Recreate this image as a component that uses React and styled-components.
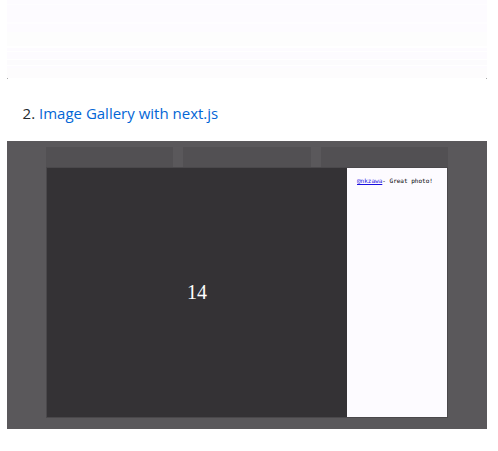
import React from "react";
import styled, { createGlobalStyle } from "styled-components";

const GlobalStyle = createGlobalStyle`
  * { box-sizing: border-box; }
  body {
    margin: 0;
    background: #ffffff;
    color: #24292e;
    font-family: "Open Sans", "Noto Sans", sans-serif;
    font-size: 15px;
    line-height: 24px;
  }
`;

const Page = styled.main`
  padding: 0 11px 22px 7px;
`;

const PreviousDemo = styled.div`
  display: flex;
  align-items: flex-end;
  justify-content: space-between;
  height: 79px;
  background: linear-gradient(
    #fdfbff 0 4px, #fefdff 4px 5px, #fdfbff 5px 22px, #fefdff 22px 24px,
    #fdfbff 24px 32px, #fdfdfd 32px 46px, #ffffff 46px 48px, #fdfbff 48px 51px,
    #ffffff 51px 52px, #fdfbff 52px 59px, #ffffff 59px 60px, #fcfbfd 60px 65px,
    #ffffff 65px 66px, #fdfbff 66px 68px, #fdfcfd 68px 78px, #ffffff 78px
  );
`;

const CornerMark = styled.span`
  width: 1px;
  height: 1px;
  background: #a9a9a9;
`;

const DemoList = styled.ol`
  margin: 0;
  padding: 22px 0 16px 32px;
`;

const DemoLink = styled.a`
  color: #0366d6;
  text-decoration: none;
`;

const Gallery = styled.section`
  padding: 6px 39px 11px;
  background: #5a585b;
`;

const TileRow = styled.div`
  display: grid;
  grid-template-columns: repeat(3, 1fr);
  gap: 10px;
  height: 20px;
`;

const Tile = styled.div`
  background: #525053;
`;

const Photo = styled.article`
  display: grid;
  grid-template-columns: minmax(0, 3fr) minmax(0, 1fr);
  height: 251px;
  border: 1px solid #4a484b;
`;

const Preview = styled.div`
  display: flex;
  align-items: center;
  justify-content: center;
  padding-bottom: 2px;
  background: #343235;
  color: #ffffff;
  font-family: "Liberation Serif", serif;
  font-size: 20px;
`;

const Comments = styled.aside`
  padding: 8px 10px;
  background: #fdfbff;
  color: #000000;
  font-family: "DejaVu Sans Mono", monospace;
  font-size: 6px;
  line-height: 10px;
  white-space: nowrap;
`;

const Author = styled.a`
  color: #1a0fe0;
  text-decoration: underline;
`;

export default function App() {
  return (
    <>
      <GlobalStyle />
      <Page>
        <PreviousDemo>
          <CornerMark />
          <CornerMark />
        </PreviousDemo>
        <DemoList start={2}>
          <li>
            <DemoLink href="#gallery">Image Gallery with next.js</DemoLink>
          </li>
        </DemoList>
        <Gallery id="gallery">
          <TileRow>
            <Tile />
            <Tile />
            <Tile />
          </TileRow>
          <Photo>
            <Preview>14</Preview>
            <Comments>
              <Author href="#nkzawa">@nkzawa</Author>- Great photo!
            </Comments>
          </Photo>
        </Gallery>
      </Page>
    </>
  );
}
